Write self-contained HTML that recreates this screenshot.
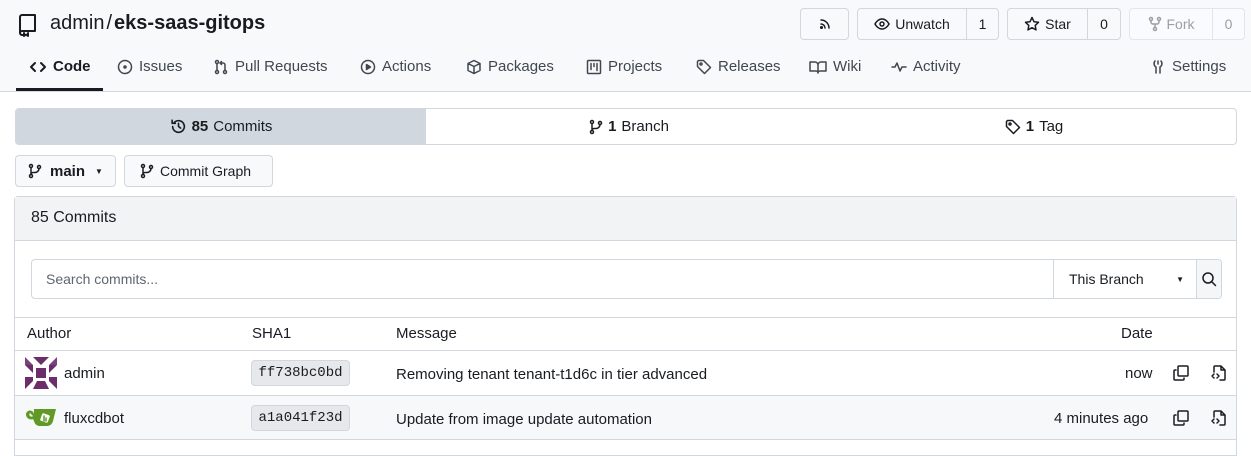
<!DOCTYPE html>
<html><head><meta charset="utf-8"><style>
*{box-sizing:border-box;margin:0;padding:0}
body{width:1251px;height:443px;overflow:hidden;background:#fff;font-family:"Liberation Sans",sans-serif;color:#181c21;font-size:14px;position:relative}
.a{position:absolute}
svg{fill:none;stroke:currentColor;stroke-width:1.5;stroke-linecap:round;stroke-linejoin:round}
.btn{position:absolute;border:1px solid #d0d7de;border-radius:4px;background:#f8f9fb;display:flex;align-items:center}
.tab{position:absolute;top:58px;font-size:15px;color:#40474f;display:flex;align-items:center;gap:6px}
.sha{position:absolute;left:251px;width:99px;height:26px;background:#e6e8eb;border:1px solid #d0d7de;border-radius:4px;font-family:"Liberation Mono",monospace;font-size:14px;display:flex;align-items:center;justify-content:center}
</style></head><body>
<div class="a" style="left:0;top:0;width:1251px;height:92px;background:#f8f9fb;border-bottom:1px solid #d0d7de"></div>
<svg class="a" style="left:17px;top:13px" width="22" height="24" viewBox="0 0 22 24"><path d="M3 20V4a2 2 0 0 1 2-2h13v16H5a2 2 0 0 0-2 2 2 2 0 0 0 2 2h2M11 20v3l-2-1.5L7 23v-3" stroke-width="2"/></svg>
<div class="a" style="left:50px;top:12px;font-size:20px">admin<span style="margin:0 2px">/</span><b>eks-saas-gitops</b></div>

<div class="btn" style="left:800px;top:8px;width:49px;height:32px;justify-content:center"><svg width="14" height="14" viewBox="0 0 14 14"><path d="M3 3a8 8 0 0 1 8 8M3 7a4 4 0 0 1 4 4"/><circle cx="3.5" cy="10.5" r="0.8" fill="currentColor"/></svg></div>
<div class="btn" style="left:857px;top:8px;width:142px;height:32px"><span style="width:109px;display:flex;align-items:center;justify-content:center;gap:5px;border-right:1px solid #d0d7de;height:100%"><svg width="16" height="16" viewBox="0 0 16 16"><path d="M1 8s2.5-5 7-5 7 5 7 5-2.5 5-7 5-7-5-7-5z"/><circle cx="8" cy="8" r="2"/></svg>Unwatch</span><span style="flex:1;text-align:center">1</span></div>
<div class="btn" style="left:1007px;top:8px;width:114px;height:32px"><span style="width:80px;display:flex;align-items:center;justify-content:center;gap:5px;border-right:1px solid #d0d7de;height:100%"><svg width="16" height="16" viewBox="0 0 16 16"><path d="M8 1.5l2 4.2 4.5.6-3.3 3.1.8 4.5L8 11.7 4 13.9l.8-4.5L1.5 6.3 6 5.7z"/></svg>Star</span><span style="flex:1;text-align:center">0</span></div>
<div class="btn" style="left:1129px;top:8px;width:116px;height:32px;color:#9aa0a6;background:#fafbfc;border-color:#e2e5e9"><span style="width:83px;display:flex;align-items:center;justify-content:center;gap:5px;border-right:1px solid #e2e5e9;height:100%"><svg width="14" height="16" viewBox="0 0 14 16"><circle cx="3" cy="3" r="1.5"/><circle cx="11" cy="3" r="1.5"/><circle cx="7" cy="13" r="1.5"/><path d="M3 4.5v1.5a2 2 0 0 0 2 2h4a2 2 0 0 0 2-2V4.5M7 8v3.5"/></svg>Fork</span><span style="flex:1;text-align:center">0</span></div>

<div class="tab" style="left:29px;color:#181c21;font-weight:bold"><svg width="18" height="14" viewBox="0 0 18 14"><path d="M6 3L2 7l4 4M12 3l4 4-4 4" stroke-width="2"/></svg>Code</div>
<div class="a" style="left:16px;top:88px;width:87px;height:3px;background:#181c21"></div>
<div class="tab" style="left:117px"><svg width="16" height="16" viewBox="0 0 16 16"><circle cx="8" cy="8" r="6.5"/><circle cx="8" cy="8" r="1" fill="currentColor"/></svg>Issues</div>
<div class="tab" style="left:213px"><svg width="16" height="16" viewBox="0 0 16 16"><circle cx="4" cy="3" r="1.5"/><circle cx="4" cy="13" r="1.5"/><circle cx="12" cy="13" r="1.5"/><path d="M4 4.5v7M12 11.5V6a2 2 0 0 0-2-2H7M8.5 2.5L7 4l1.5 1.5"/></svg>Pull Requests</div>
<div class="tab" style="left:360px"><svg width="16" height="16" viewBox="0 0 16 16"><circle cx="8" cy="8" r="6.5"/><path d="M6.5 5.5v5l4-2.5z" fill="currentColor"/></svg>Actions</div>
<div class="tab" style="left:466px"><svg width="16" height="16" viewBox="0 0 16 16"><path d="M8 1.5l6 3v7l-6 3-6-3v-7zM2 4.5l6 3 6-3M8 7.5v7"/></svg>Packages</div>
<div class="tab" style="left:586px"><svg width="16" height="16" viewBox="0 0 16 16"><rect x="1.5" y="1.5" width="13" height="13" rx="1"/><path d="M5 4.5v6M8 4.5v3M11 4.5v7"/></svg>Projects</div>
<div class="tab" style="left:696px"><svg width="16" height="16" viewBox="0 0 16 16"><path d="M1.5 2.5v5l7 7 6-6-7-7h-5z"/><circle cx="5" cy="5" r="1"/></svg>Releases</div>
<div class="tab" style="left:809px"><svg width="18" height="16" viewBox="0 0 18 16"><path d="M1 3h5a3 3 0 0 1 3 3v8a2 2 0 0 0-2-2H1zM17 3h-5a3 3 0 0 0-3 3v8a2 2 0 0 1 2-2h6z"/></svg>Wiki</div>
<div class="tab" style="left:891px"><svg width="16" height="16" viewBox="0 0 16 16"><path d="M1 8h3l2-4 3 8 2-4h4"/></svg>Activity</div>
<div class="tab" style="left:1150px"><svg width="16" height="16" viewBox="0 0 16 16"><path d="M5 2a4 4 0 0 0 1 6v6M11 2a4 4 0 0 1-1 6v6M8 2v3"/></svg>Settings</div>

<div class="a" style="left:15px;top:108px;width:1222px;height:37px;border:1px solid #d0d7de;border-radius:4px;overflow:hidden;display:flex;font-size:15px">
<div style="width:410px;background:#d0d7de;display:flex;align-items:center;justify-content:center;gap:5px"><svg width="17" height="17" viewBox="0 0 16 16"><path d="M2.5 8a5.5 5.5 0 1 0 1.6-3.9M2 2v3h3M8 5v3l2 1.5"/></svg><b>85</b> Commits</div>
<div style="width:406px;display:flex;align-items:center;justify-content:center;gap:5px"><svg width="14" height="16" viewBox="0 0 14 16"><circle cx="3" cy="3" r="1.5"/><circle cx="3" cy="13" r="1.5"/><circle cx="11" cy="4" r="1.5"/><path d="M3 4.5v7M11 5.5a4 4 0 0 1-4 4H5a2 2 0 0 0-2 2"/></svg><b>1</b> Branch</div>
<div style="flex:1;display:flex;align-items:center;justify-content:center;gap:5px"><svg width="16" height="16" viewBox="0 0 16 16"><path d="M1.5 2.5v5l7 7 6-6-7-7h-5z"/><circle cx="5" cy="5" r="1"/></svg><b>1</b> Tag</div>
</div>

<div class="btn" style="left:15px;top:155px;width:101px;height:32px;padding-left:12px;gap:8px;font-weight:bold;font-size:15px"><svg width="14" height="16" viewBox="0 0 14 16"><circle cx="3" cy="3" r="1.5"/><circle cx="3" cy="13" r="1.5"/><circle cx="11" cy="4" r="1.5"/><path d="M3 4.5v7M11 5.5a4 4 0 0 1-4 4H5a2 2 0 0 0-2 2"/></svg>main<span style="font-size:8px;font-weight:normal;margin-left:2px">▼</span></div>
<div class="btn" style="left:124px;top:155px;width:149px;height:32px;padding-left:15px;gap:6px"><svg width="14" height="16" viewBox="0 0 14 16"><circle cx="3" cy="3" r="1.5"/><circle cx="3" cy="13" r="1.5"/><circle cx="11" cy="4" r="1.5"/><path d="M3 4.5v7M11 5.5a4 4 0 0 1-4 4H5a2 2 0 0 0-2 2"/></svg>Commit Graph</div>

<div class="a" style="left:14px;top:196px;width:1223px;height:260px;border:1px solid #d0d7de;border-radius:4px 4px 0 0"></div>
<div class="a" style="left:15px;top:197px;width:1221px;height:44px;background:#f2f3f5;border-bottom:1px solid #d0d7de;padding:12px 16px;font-size:16px">85 Commits</div>

<div class="a" style="left:31px;top:259px;width:1191px;height:40px;border:1px solid #d0d7de;border-radius:4px;display:flex;align-items:center;overflow:hidden">
<span style="flex:1;padding-left:14px;color:#5f6670">Search commits...</span>
<span style="width:143px;height:100%;border-left:1px solid #d0d7de;display:flex;align-items:center;padding-left:15px">This Branch<span style="margin-left:auto;margin-right:12px;font-size:8px">▼</span></span>
<span style="width:25px;height:100%;border-left:1px solid #d0d7de;background:#f5f6f8;display:flex;align-items:center;justify-content:center"><svg width="16" height="16" viewBox="0 0 16 16"><circle cx="7" cy="7" r="5"/><path d="M11 11l3.5 3.5"/></svg></span>
</div>

<div class="a" style="left:15px;top:317px;width:1221px;height:1px;background:#d0d7de"></div>
<div class="a" style="left:27px;top:325px;font-size:15px">Author</div>
<div class="a" style="left:252px;top:325px;font-size:15px">SHA1</div>
<div class="a" style="left:396px;top:325px;font-size:15px">Message</div>
<div class="a" style="left:1121px;top:325px;font-size:15px">Date</div>
<div class="a" style="left:15px;top:350px;width:1221px;height:1px;background:#d0d7de"></div>
<div class="a" style="left:15px;top:395px;width:1221px;height:45px;background:#f7f8fa;border-top:1px solid #d0d7de;border-bottom:1px solid #d0d7de"></div>

<svg class="a" style="left:25px;top:357px;stroke:none" width="32" height="32" viewBox="0 0 32 32"><g fill="#6b2e6b"><path d="M11 11h10v10H11zM8 0l8 8 8-8zM0 8h8v8zM32 8h-8v8zM0 20l8 0 0 4-8 8zM32 20h-8v4l8 8zM8 32l4-8h8l4 8z"/><path d="M0 8l8 0L0 0zM32 8h-8l8-8z" opacity=".9"/></g></svg>
<div class="a" style="left:64px;top:365px;font-size:15px">admin</div>
<div class="sha" style="top:360px">ff738bc0bd</div>
<div class="a" style="left:396px;top:366px;font-size:15px">Removing tenant tenant-t1d6c in tier advanced</div>
<div class="a" style="left:1125px;top:365px;font-size:15px">now</div>

<svg class="a" style="left:25px;top:405px;stroke:none" width="32" height="24" viewBox="0 0 32 24"><path fill="#609926" d="M9 4h22l-3 12a6 6 0 0 1-6 5H14a6 6 0 0 1-5-5l-1-2a5 5 0 0 1-7-4 4 4 0 0 1 8-1zM5 8a2 2 0 0 0 3 3z"/><rect x="16" y="9" width="8" height="8" rx="1.5" fill="#fff" transform="rotate(20 20 13)"/><path d="M19 11v5M21 13v3" stroke="#609926" stroke-width="1.5"/></svg>
<div class="a" style="left:64px;top:410px;font-size:15px">fluxcdbot</div>
<div class="sha" style="top:405px">a1a041f23d</div>
<div class="a" style="left:396px;top:411px;font-size:15px">Update from image update automation</div>
<div class="a" style="left:1054px;top:410px;font-size:15px">4 minutes ago</div>

<svg class="a" style="left:1172px;top:364px" width="18" height="18" viewBox="0 0 18 18"><rect x="6" y="2" width="10" height="10" rx="1"/><path d="M4 6H3a1 1 0 0 0-1 1v8a1 1 0 0 0 1 1h8a1 1 0 0 0 1-1v-1"/></svg>
<svg class="a" style="left:1209px;top:364px" width="18" height="18" viewBox="0 0 18 18"><path d="M5 8V3a1 1 0 0 1 1-1h6l4 4v9a1 1 0 0 1-1 1h-4M12 2v4h4M5 10l-2 2 2 2M8 10l2 2-2 2"/></svg>
<svg class="a" style="left:1172px;top:409px" width="18" height="18" viewBox="0 0 18 18"><rect x="6" y="2" width="10" height="10" rx="1"/><path d="M4 6H3a1 1 0 0 0-1 1v8a1 1 0 0 0 1 1h8a1 1 0 0 0 1-1v-1"/></svg>
<svg class="a" style="left:1209px;top:409px" width="18" height="18" viewBox="0 0 18 18"><path d="M5 8V3a1 1 0 0 1 1-1h6l4 4v9a1 1 0 0 1-1 1h-4M12 2v4h4M5 10l-2 2 2 2M8 10l2 2-2 2"/></svg>
</body></html>
